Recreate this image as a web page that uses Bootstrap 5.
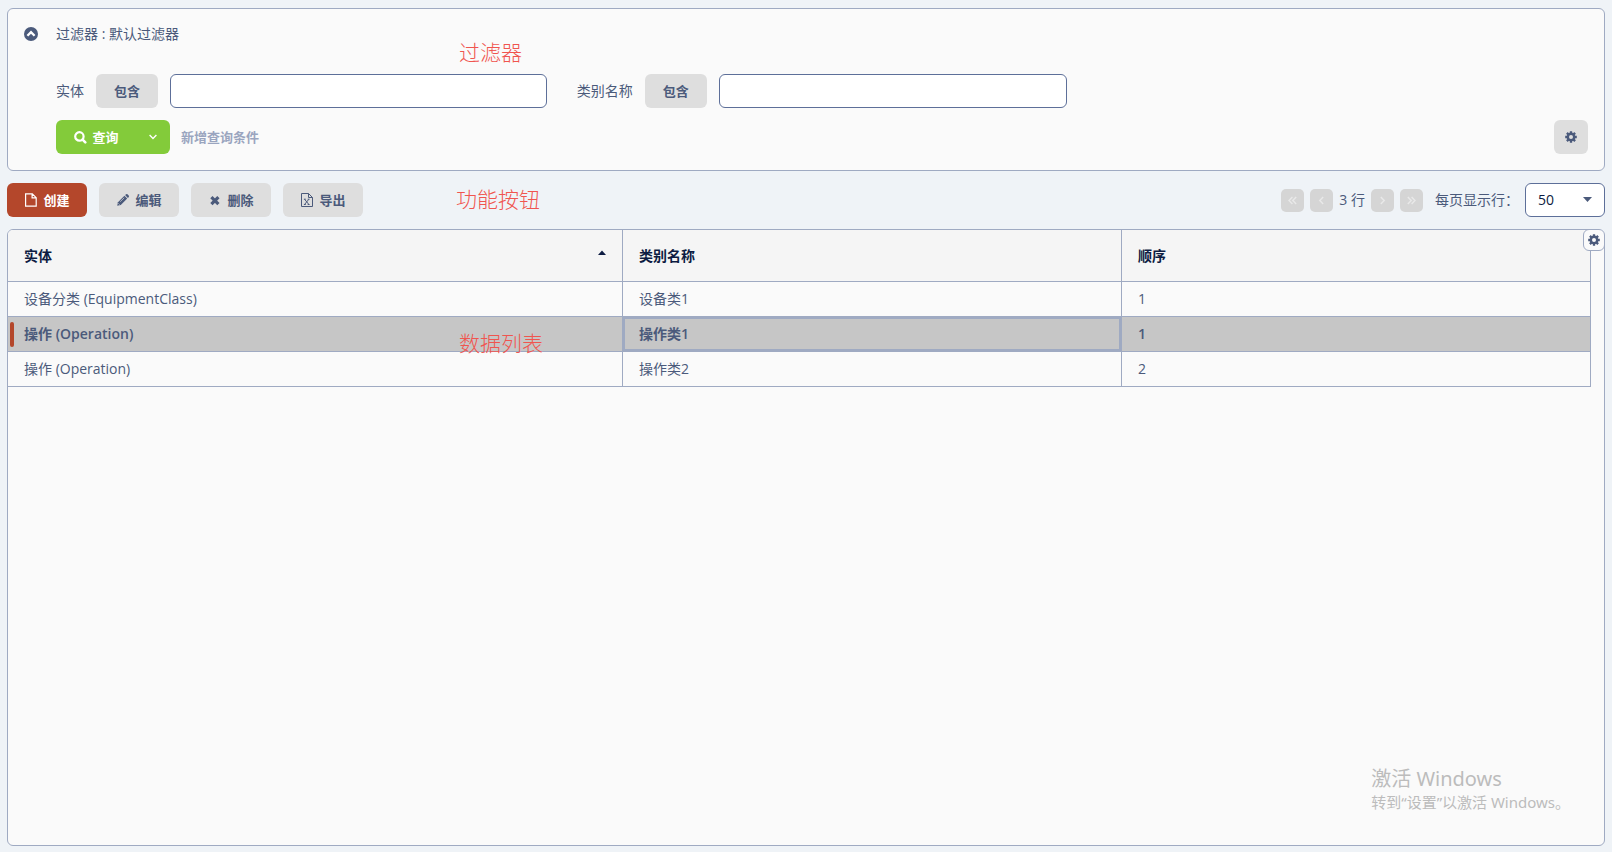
<!DOCTYPE html>
<html lang="zh-CN">
<head>
<meta charset="utf-8">
<meta name="viewport" content="width=device-width, initial-scale=1">
<title>类别管理</title>
<link href="https://cdn.jsdelivr.net/npm/bootstrap@5.3.0/dist/css/bootstrap.min.css" rel="stylesheet">
<style>
  :root { --line: #9faac2; --ink: #4b5a7b; --ink-dark: #0d1c42; --field: #5d6f99; --surface: #fafafa; --chip: #dedede; }
  body { background: #eff3f7; color: var(--ink); font-family: "Open Sans", "Noto Sans CJK SC", sans-serif; font-size: 14px; line-height: 20px; }
  svg { display: block; flex: none; }
  .page { padding: 8px 7px 6px; gap: 12px; }
  .panel { background: var(--surface); border: 1px solid var(--line); border-radius: 6px; }
  .filter-panel { padding: 15px 16px 16px; }
  .filter-head { gap: 18px; height: 20px; }
  .filter-head .toggle { color: var(--ink); background: none; border: 0; padding: 0; }
  .filter-body { padding-left: 32px; margin-top: 30px; }
  .filter-fields { --bs-gutter-x: 30px; --bs-gutter-y: 0; }
  .filter-fields label { margin-right: 12px; white-space: nowrap; }
  .tool { height: 34px; min-width: 80px; padding: 0 16px; border: 0; border-radius: 6px; background: var(--chip); color: var(--ink); font-size: 13px; line-height: 20px; font-weight: 700; display: inline-flex; align-items: center; justify-content: center; gap: 5px; white-space: nowrap; }
  .tool:hover { background: #d2d2d2; color: var(--ink); }
  .tool-row { gap: 12px; }
  .tool-op { min-width: 62px; margin-right: 12px; }
  .tool-square { min-width: 34px; padding: 0; }
  .tool-create, .tool-create:hover { background: #b4472b; color: #fff; }
  .tool-search, .tool-search:hover { background: #83cb3a; color: #fff; }
  .tool-search { border-radius: 6px 0 0 6px; padding: 0 16px; }
  .tool-more { border-radius: 0 6px 6px 0; min-width: 34px; padding: 0; }
  .field { height: 34px; min-width: 0; border: 1px solid var(--field); border-radius: 6px; padding: 0 12px; font-size: 14px; color: var(--ink-dark); }
  .add-link { color: #9aa5bf; font-size: 13px; font-weight: 700; text-decoration: none; margin-left: 11px; }
  .pager { gap: 6px; }
  .pager button { width: 23px; height: 23px; border: 0; border-radius: 5px; padding: 0; background: #d5d5d5; color: #e9e9e9; display: flex; align-items: center; justify-content: center; }
  .page-size-label { margin: 0 6px 0 12px; }
  .page-size { position: relative; width: 80px; color: var(--ink); }
  .page-size select { width: 100%; appearance: none; background: #fff; }
  .page-size svg { position: absolute; right: 13px; top: 14px; pointer-events: none; }
  .grid-panel { min-height: 300px; overflow: hidden; }
  .grid-wrap { padding-right: 13px; }
  .grid-table { width: 100%; table-layout: fixed; border-collapse: separate; border-spacing: 0; }
  .grid-table th, .grid-table td { border: solid var(--line); border-width: 0 1px 1px 0; padding: 0 16px; height: 35px; }
  .grid-table th { height: 52px; background: #f5f5f5; color: var(--ink-dark); font-weight: 700; }
  .c-entity { width: 38.85%; }
  .c-name { width: 31.52%; }
  .is-selected td { background: #c6c6c6; font-weight: 600; position: relative; }
  .is-selected td:first-child::before { content: ""; position: absolute; left: 2px; top: 5px; bottom: 4px; width: 4px; border-radius: 2px; background: #b4472b; }
  .grid-table td.is-focused { box-shadow: inset 0 0 0 2px var(--line); }
  .grid-menu { position: absolute; top: -1px; right: -1px; width: 22px; height: 22px; padding: 0; background: var(--surface); border: 1px solid var(--line); border-radius: 6px; color: var(--ink); display: flex; align-items: center; justify-content: center; }
  .callout-text { position: absolute; color: #f0554f; font-size: 21px; line-height: 30px; font-weight: 300; white-space: nowrap; pointer-events: none; }
  .callout-filter { left: 451px; top: 28px; }
  .callout-tools { left: 449px; top: 1px; }
  .callout-grid { left: 451px; top: 98px; }
  .watermark { position: absolute; right: 34px; bottom: 32px; color: #bcbcbc; font-size: 15px; line-height: 22px; white-space: nowrap; pointer-events: none; font-family: "Noto Sans", "Noto Sans CJK SC", sans-serif; }
  .watermark strong { display: block; font-size: 20px; line-height: 24px; font-weight: 400; }
</style>
</head>
<body>
<svg class="d-none" aria-hidden="true">
  <symbol id="i-cog" viewBox="0 0 12 12">
    <path d="M6 0.2V2.6M6 9.4V11.8M0.2 6H2.6M9.4 6H11.8M1.9 1.9L3.6 3.6M8.4 8.4L10.1 10.1M10.1 1.9L8.4 3.6M3.6 8.4L1.9 10.1" stroke="currentColor" stroke-width="2.3"/>
    <circle cx="6" cy="6" r="3.2" fill="none" stroke="currentColor" stroke-width="2.4"/>
  </symbol>
</svg>
<div class="page d-flex flex-column min-vh-100">

  <section class="panel filter-panel position-relative">
    <div class="filter-head d-flex align-items-center">
      <button type="button" class="toggle" aria-label="折叠">
        <svg width="14" height="14" viewBox="0 0 14 14"><circle cx="7" cy="7" r="7" fill="currentColor"/><path d="M3.4 8.8L7 5.2L10.6 8.8" fill="none" stroke="#fff" stroke-width="2.3"/></svg>
      </button>
      <span>过滤器 : 默认过滤器</span>
    </div>
    <form class="filter-body">
      <div class="row filter-fields">
        <div class="col-4 d-flex align-items-center">
          <label for="f-entity">实体</label>
          <button type="button" class="tool tool-op">包含</button>
          <input id="f-entity" type="text" class="field flex-grow-1">
        </div>
        <div class="col-4 d-flex align-items-center">
          <label for="f-name">类别名称</label>
          <button type="button" class="tool tool-op">包含</button>
          <input id="f-name" type="text" class="field flex-grow-1">
        </div>
      </div>
      <div class="d-flex align-items-center mt-2 pt-1">
        <button type="button" class="tool tool-search">
          <svg width="14" height="14" viewBox="0 0 14 14" fill="none" stroke="currentColor"><circle cx="6.4" cy="6.4" r="4.2" stroke-width="2.2"/><path d="M9.6 9.6L12.3 12.3" stroke-width="2.6" stroke-linecap="round"/></svg>
          查询
        </button>
        <button type="button" class="tool tool-search tool-more" aria-label="更多">
          <svg width="8" height="6" viewBox="0 0 8 6"><path d="M0.6 1L4 4.4L7.4 1" fill="none" stroke="currentColor" stroke-width="1.4"/></svg>
        </button>
        <a href="#" class="add-link">新增查询条件</a>
        <button type="button" class="tool tool-square ms-auto" aria-label="设置"><svg width="12" height="12"><use href="#i-cog"/></svg></button>
      </div>
    </form>
    <span class="callout-text callout-filter">过滤器</span>
  </section>

  <div class="d-flex align-items-center justify-content-between position-relative">
    <div class="tool-row d-flex">
      <button type="button" class="tool tool-create">
        <svg width="14" height="14" viewBox="0 0 14 14" fill="none" stroke="currentColor" stroke-width="1.2"><path d="M1.6 0.8H8.3L12.2 4.7V13.2H1.6ZM8.1 0.8V4.9H12.2"/></svg>
        创建
      </button>
      <button type="button" class="tool">
        <svg width="14" height="14" viewBox="0 0 14 14"><path d="M1.2 12.8L2 9.2L8.4 2.8L11.2 5.6L4.8 12Z" fill="currentColor"/><path d="M9.1 2.1L10.1 1.2Q10.8 .7 11.5 1.3L12.7 2.5Q13.3 3.2 12.8 3.9L11.9 4.9Z" fill="currentColor"/><path d="M4.2 8.7L8.2 4.8M2.4 10.4L3.6 11.6" stroke="#dedede" stroke-width=".7"/></svg>
        编辑
      </button>
      <button type="button" class="tool">
        <svg width="14" height="14" viewBox="0 0 14 14"><path d="M3.4 4.2L10.4 11.2M10.4 4.2L3.4 11.2" stroke="currentColor" stroke-width="3.2"/></svg>
        删除
      </button>
      <button type="button" class="tool">
        <svg width="14" height="14" viewBox="0 0 14 14" fill="none" stroke="currentColor"><path d="M1.5 0.5H8.5L12.5 4.5V13.5H1.5ZM8.5 0.5V4.5H12.5"/><path d="M4.6 6.3L8.8 11.4M8.8 6.3L4.6 11.4M3.9 6.2H5.8M7.7 6.2H9.5M3.9 11.5H5.8M7.7 11.5H9.5"/></svg>
        导出
      </button>
    </div>
    <div class="d-flex align-items-center">
      <div class="pager d-flex align-items-center">
        <button type="button" aria-label="首页"><svg width="9" height="9" viewBox="0 0 9 9" fill="none" stroke="currentColor" stroke-width="1.4"><path d="M4.4 1L1 4.5L4.4 8M8.2 1L4.8 4.5L8.2 8"/></svg></button>
        <button type="button" aria-label="上一页"><svg width="9" height="9" viewBox="0 0 9 9" fill="none" stroke="currentColor" stroke-width="1.4"><path d="M6.2 1L2.8 4.5L6.2 8"/></svg></button>
        <span>3 行</span>
        <button type="button" aria-label="下一页"><svg width="9" height="9" viewBox="0 0 9 9" fill="none" stroke="currentColor" stroke-width="1.4"><path d="M2.8 1L6.2 4.5L2.8 8"/></svg></button>
        <button type="button" aria-label="末页"><svg width="9" height="9" viewBox="0 0 9 9" fill="none" stroke="currentColor" stroke-width="1.4"><path d="M.8 1L4.2 4.5L.8 8M4.6 1L8 4.5L4.6 8"/></svg></button>
      </div>
      <label for="page-size" class="page-size-label">每页显示行：</label>
      <div class="page-size">
        <select id="page-size" class="field"><option>50</option></select>
        <svg width="9" height="5" viewBox="0 0 9 5"><path d="M0 0H9L4.5 5Z" fill="currentColor"/></svg>
      </div>
    </div>
    <span class="callout-text callout-tools">功能按钮</span>
  </div>

  <section class="panel grid-panel position-relative flex-grow-1">
    <div class="grid-wrap">
      <table class="grid-table">
        <thead>
          <tr>
            <th class="c-entity"><div class="d-flex justify-content-between">实体<svg class="mt-1" width="8" height="5" viewBox="0 0 8 5"><path d="M0 5H8L4 0.6Z" fill="currentColor"/></svg></div></th>
            <th class="c-name">类别名称</th>
            <th>顺序</th>
          </tr>
        </thead>
        <tbody>
          <tr><td>设备分类 (EquipmentClass)</td><td>设备类1</td><td>1</td></tr>
          <tr class="is-selected"><td>操作 (Operation)</td><td class="is-focused">操作类1</td><td>1</td></tr>
          <tr><td>操作 (Operation)</td><td>操作类2</td><td>2</td></tr>
        </tbody>
      </table>
    </div>
    <button type="button" class="grid-menu" aria-label="列设置"><svg width="12" height="12"><use href="#i-cog"/></svg></button>
    <span class="callout-text callout-grid">数据列表</span>
    <div class="watermark"><strong>激活 Windows</strong>转到“设置”以激活 Windows。</div>
  </section>
</div>
<script src="https://cdn.jsdelivr.net/npm/bootstrap@5.3.0/dist/js/bootstrap.bundle.min.js"></script>
</body>
</html>
